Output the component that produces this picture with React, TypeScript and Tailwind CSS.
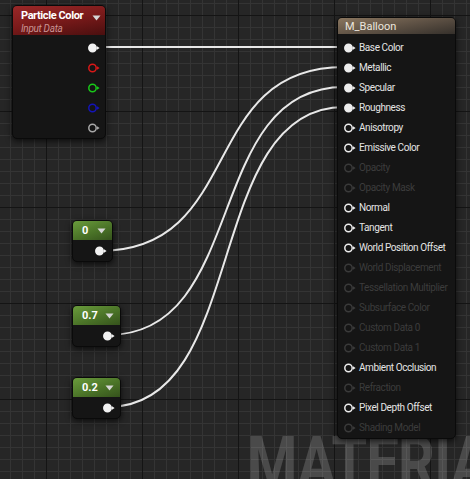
import React from "react";

type PinProps = { color: string; filled?: boolean };

function Pin({ color, filled }: PinProps) {
  return (
    <svg width="12" height="10" viewBox="0 0 12 10" className="shrink-0">
      <circle cx="4.5" cy="5" r="3.7" fill={filled ? color : "none"} stroke={color} strokeWidth="1.5" />
      <path d="M9 3.2 L11.6 5 L9 6.8 Z" fill={color} />
    </svg>
  );
}

function Caret({ className }: { className?: string }) {
  return (
    <svg width="9" height="6" viewBox="0 0 9 6" className={className}>
      <path d="M0.5 0.5 H8.5 L4.5 5.5 Z" fill="#d6d6d6" />
    </svg>
  );
}

const inputs: { label: string; state: "wired" | "open" | "off" }[] = [
  { label: "Base Color", state: "wired" },
  { label: "Metallic", state: "wired" },
  { label: "Specular", state: "wired" },
  { label: "Roughness", state: "wired" },
  { label: "Anisotropy", state: "open" },
  { label: "Emissive Color", state: "open" },
  { label: "Opacity", state: "off" },
  { label: "Opacity Mask", state: "off" },
  { label: "Normal", state: "open" },
  { label: "Tangent", state: "open" },
  { label: "World Position Offset", state: "open" },
  { label: "World Displacement", state: "off" },
  { label: "Tessellation Multiplier", state: "off" },
  { label: "Subsurface Color", state: "off" },
  { label: "Custom Data 0", state: "off" },
  { label: "Custom Data 1", state: "off" },
  { label: "Ambient Occlusion", state: "open" },
  { label: "Refraction", state: "off" },
  { label: "Pixel Depth Offset", state: "open" },
  { label: "Shading Model", state: "off" },
];

// wire from output pin to material input, horizontal tangents
function wire(x1: number, y1: number, x2: number, y2: number) {
  const c = (x2 - x1) * 0.6;
  return `M${x1} ${y1} C${x1 + c} ${y1} ${x2 - c} ${y2} ${x2} ${y2}`;
}

function Grid() {
  const minorX = Array.from({ length: 40 }, (_, i) => 10 + i * 12);
  const minorY = Array.from({ length: 41 }, (_, i) => 3 + i * 12);
  const majorX = [46, 142, 238, 334, 430];
  const majorY = [15, 111, 207, 303, 399];
  return (
    <svg width="470" height="479" className="absolute inset-0">
      {minorX.map((x) => (
        <line key={"vx" + x} x1={x + 0.5} y1="0" x2={x + 0.5} y2="479" stroke="#343434" />
      ))}
      {minorY.map((y) => (
        <line key={"hy" + y} x1="0" y1={y + 0.5} x2="470" y2={y + 0.5} stroke="#343434" />
      ))}
      {majorX.map((x) => (
        <line key={"mx" + x} x1={x + 0.5} y1="0" x2={x + 0.5} y2="479" stroke="#141414" />
      ))}
      {majorY.map((y) => (
        <line key={"my" + y} x1="0" y1={y + 0.5} x2="470" y2={y + 0.5} stroke="#141414" />
      ))}
    </svg>
  );
}

function ConstantNode({ value, left, top, width }: { value: string; left: string; top: string; width: string }) {
  return (
    <div className={`absolute ${left} ${top} ${width} h-[42px] rounded-[5px] bg-[#151515] border border-[#0a0a0a] shadow-[0_2px_6px_rgba(0,0,0,0.7)] overflow-hidden flex flex-col`}>
      <div className="h-[19px] flex items-center justify-between pl-[9px] pr-[6px] bg-[linear-gradient(160deg,#6a9c3c_0%,#4b7428_55%,#35521c_100%)]">
        <span className="text-[11px] font-bold text-white leading-none">{value}</span>
        <Caret />
      </div>
      <div className="flex-1 flex items-center justify-end pr-[5px]">
        <Pin color="#f2f2f2" filled />
      </div>
    </div>
  );
}

export default function App() {
  return (
    <div className="relative w-[470px] h-[479px] overflow-hidden bg-[#262626] font-['Roboto',sans-serif]">
      <Grid />

      {/* watermark */}
      <div className="absolute left-[247px] top-[428px] origin-left scale-x-[0.8] text-[72px] font-bold leading-none whitespace-nowrap text-white/[0.17] tracking-[-1px]">
        MATERIAL
      </div>

      {/* wires */}
      <svg width="470" height="479" className="absolute inset-0">
        <g fill="none" stroke="#e8e8e8" strokeWidth="2" strokeLinecap="round">
          <path d="M99 47 L344 47" />
          <path d={wire(99, 251, 344, 67)} />
          <path d={wire(108, 335, 344, 87)} />
          <path d={wire(108, 407, 344, 107)} />
        </g>
      </svg>

      {/* Particle Color */}
      <div className="absolute left-[12px] top-[5px] w-[94px] h-[134px] rounded-[5px] bg-[#151515] border border-[#0a0a0a] shadow-[0_2px_6px_rgba(0,0,0,0.7)] overflow-hidden flex flex-col">
        <div className="h-[29px] relative pl-[8px] pt-[3px] bg-[linear-gradient(170deg,#9a2828_0%,#7a1a1a_50%,#4a0f0f_100%)]">
          <div className="text-[11px] font-bold text-white leading-[14px] tracking-[-0.4px]">Particle Color</div>
          <div className="text-[10px] italic text-[#c99393] leading-[12px] tracking-[-0.3px]">Input Data</div>
          <Caret className="absolute right-[4px] top-[9px]" />
        </div>
        <div className="flex flex-col pt-[3px]">
          {["#f2f2f2", "#d81818", "#18c818", "#1414b8", "#a8a8a8"].map((c, i) => (
            <div key={c} className="h-[20px] flex items-center justify-end pr-[5px]">
              <Pin color={c} filled={i === 0} />
            </div>
          ))}
        </div>
      </div>

      <ConstantNode value="0" left="left-[72px]" top="top-[220px]" width="w-[41px]" />
      <ConstantNode value="0.7" left="left-[72px]" top="top-[305px]" width="w-[49px]" />
      <ConstantNode value="0.2" left="left-[72px]" top="top-[377px]" width="w-[49px]" />

      {/* M_Balloon */}
      <div className="absolute left-[337px] top-[17px] w-[119px] h-[422px] rounded-[5px] bg-[#151515] border border-[#0a0a0a] shadow-[0_2px_6px_rgba(0,0,0,0.7)] overflow-hidden flex flex-col">
        <div className="h-[16px] flex items-center pl-[7px] bg-[linear-gradient(170deg,#8a765f_0%,#5f5245_50%,#35302b_100%)]">
          <span className="text-[11px] text-[#ece6de] leading-none">M_Balloon</span>
        </div>
        <div className="flex flex-col pt-[4px]">
          {inputs.map((r) => (
            <div key={r.label} className="h-[20px] flex items-center gap-[3px] pl-[6px]">
              <Pin color={r.state === "off" ? "#3a3a3a" : "#ececec"} filled={r.state === "wired"} />
              <span
                className={`text-[10px] leading-none whitespace-nowrap tracking-[-0.4px] ${
                  r.state === "off" ? "text-[#3c3c3c]" : "text-[#e4e4e4]"
                }`}
              >
                {r.label}
              </span>
            </div>
          ))}
        </div>
      </div>
    </div>
  );
}
